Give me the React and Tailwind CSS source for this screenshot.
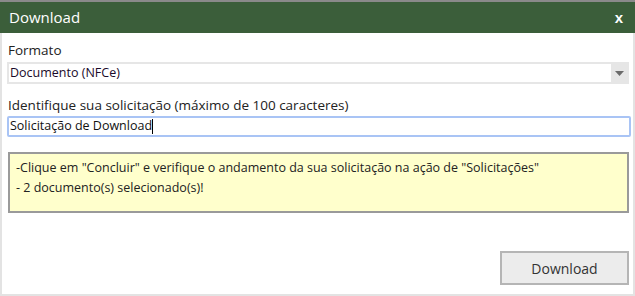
export default function App() {
  return (
    <div className="w-[635px] h-[296px] bg-white flex flex-col" style={{ fontFamily: '"Open Sans", "Noto Sans", sans-serif' }}>
      <div className="h-[2px] bg-[#8a8a8a]" />
      <div className="flex-1 flex flex-col border-l-2 border-r-2 border-b-2 border-[#e3e3e3] relative">
        <div className="h-[31px] bg-[#3b5e3a] flex items-center justify-between pl-[7px] pr-[12px] -mr-[2px] -ml-[2px]">
          <span className="text-white text-[15px] pl-[2px]">Download</span>
          <span className="text-white font-extrabold text-[15px] leading-none" style={{ fontFamily: '"Liberation Sans", sans-serif' }}>x</span>
        </div>

        <div className="pl-[5px] pr-[4px] flex flex-col">
          <label className="mt-[8px] text-[13.5px] text-[#222] pl-[1px] leading-[19px]">Formato</label>
          <div className="mt-[2px] h-[22px] border-2 border-[#e6e6e6] flex items-center justify-between">
            <span className="text-[12.5px] text-[#1a0a2a] pl-[1px]">Documento (NFCe)</span>
            <span className="w-[16px] h-[18px] bg-[#e6e6e6] flex items-center justify-center">
              <svg width="9" height="5" viewBox="0 0 9 5"><path d="M0 0h9L4.5 5z" fill="#6b6b6b" /></svg>
            </span>
          </div>

          <label className="mt-[12px] text-[13.5px] text-[#222] pl-[1px] leading-[19px]">Identifique sua solicitação (máximo de 100 caracteres)</label>
          <div className="mt-[1px] h-[21px] border-2 border-[#a9c4f5] rounded-[2px] flex items-center -mr-[2px]">
            <span className="text-[12.5px] text-[#111] pl-[1px]">Solicitação de Download</span>
            <span className="w-px h-[15px] bg-black" />
          </div>

          <div className="mt-[15px] ml-[1px] h-[61px] border-2 border-[#9a9a9a] bg-[#ffffcc] pl-[6px] pt-[4px] text-[12.5px] text-[#222] leading-[20px]">
            <div>-Clique em "Concluir" e verifique o andamento da sua solicitação na ação de "Solicitações"</div>
            <div>- 2 documento(s) selecionado(s)!</div>
          </div>

          <div className="flex justify-end mt-[38px]">
            <button className="w-[129px] h-[34px] bg-[#ececec] border-2 border-[#b5b5b5] text-[14px] text-[#333]">Download</button>
          </div>
        </div>
      </div>
    </div>
  );
}
